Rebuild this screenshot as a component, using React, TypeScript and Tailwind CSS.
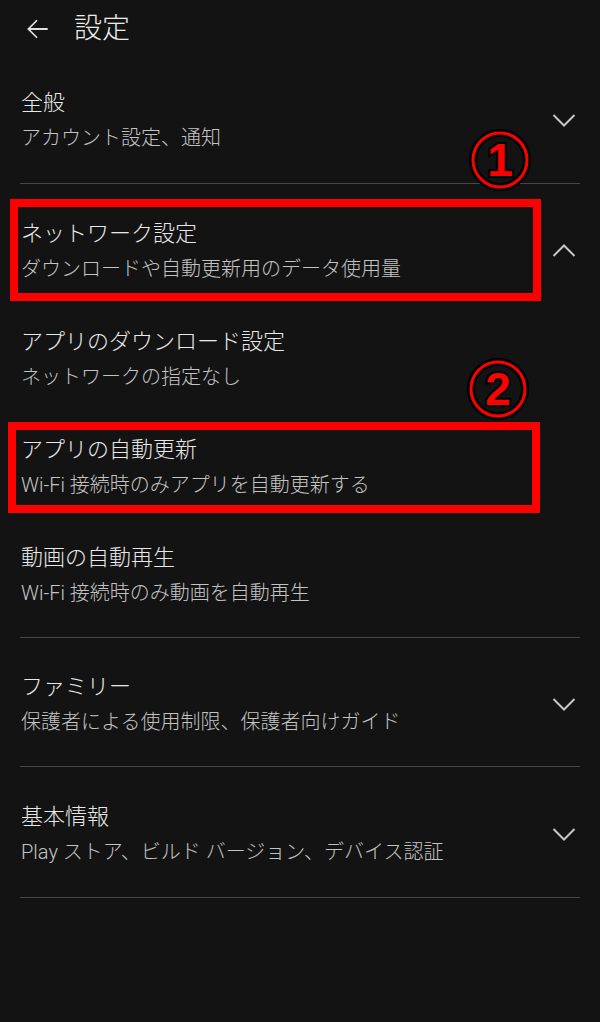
import { ReactNode } from 'react';

type Item = {
  title: string;
  subtitle: string;
};

const Chevron = ({ up = false }: { up?: boolean }) => (
  <svg width="24" height="24" viewBox="0 0 24 24" className="shrink-0">
    <path
      d={up ? 'M1.5 17 L12 6.5 L22.5 17' : 'M1.5 7 L12 17.5 L22.5 7'}
      fill="none"
      stroke="#c6c6c6"
      strokeWidth="2"
    />
  </svg>
);

const Pair = ({ item }: { item: Item }) => (
  <div className="flex flex-col min-w-0">
    <p className="text-[22px] leading-[30px] text-[#e8e8e8]">{item.title}</p>
    <p className="text-[20px] leading-[28px] mt-[6px] text-[#c3c3c3] whitespace-nowrap">{item.subtitle}</p>
  </div>
);

const Group = ({ item, icon, className }: { item: Item; icon: ReactNode; className: string }) => (
  <div className={`flex items-center justify-between pl-[21px] pr-[24px] ${className}`}>
    <Pair item={item} />
    {icon}
  </div>
);

const Divider = () => <div className="mx-5 h-px bg-[#474747]" />;

const Circled = ({ n, x, y }: { n: string; x: number; y: number }) => (
  <svg
    width="64"
    height="64"
    viewBox="0 0 64 64"
    className="absolute"
    style={{ left: x - 32, top: y - 32 }}
  >
    <circle cx="32" cy="32" r="27" fill="none" stroke="#000" strokeWidth="8" />
    <circle cx="32" cy="32" r="27" fill="none" stroke="#ff0000" strokeWidth="3" />
    <text
      x="32"
      y="48"
      textAnchor="middle"
      fontFamily="Liberation Sans, Arial, sans-serif"
      fontWeight="700"
      fontSize="46"
      fill="#ff0000"
      stroke="#000"
      strokeWidth="4"
      paintOrder="stroke"
    >
      {n}
    </text>
  </svg>
);

const network: Item[] = [
  { title: 'ネットワーク設定', subtitle: 'ダウンロードや自動更新用のデータ使用量' },
  { title: 'アプリのダウンロード設定', subtitle: 'ネットワークの指定なし' },
  { title: 'アプリの自動更新', subtitle: 'Wi-Fi 接続時のみアプリを自動更新する' },
  { title: '動画の自動再生', subtitle: 'Wi-Fi 接続時のみ動画を自動再生' },
];

export default function App() {
  return (
    <div className="relative h-[1022px] w-[600px] overflow-hidden bg-[#131313] font-light font-['Roboto','Noto_Sans_CJK_JP',sans-serif]">
      <div className="flex h-[57px] items-center pl-[21px]">
        <svg width="32" height="32" viewBox="0 0 24 24">
          <path
            d="M20 11.3H7.1l5.4-5.4L11.6 5l-7 7 7 7 .9-.9-5.4-5.4H20v-1.4z"
            fill="#e0e0e0"
          />
        </svg>
        <h1 className="ml-[21px] text-[28px] leading-[36px] text-[#ececec]">設定</h1>
      </div>

      <Group
        item={{ title: '全般', subtitle: 'アカウント設定、通知' }}
        icon={<Chevron />}
        className="pt-[31px] pb-[31px]"
      />
      <Divider />

      <div className="pt-[13px] pb-[8px]">
        {network.map((item, i) => (
          <div key={item.title} className="flex h-[108px] items-center justify-between pl-[21px] pr-[24px]">
            <Pair item={item} />
            {i === 0 && <Chevron up />}
          </div>
        ))}
      </div>
      <Divider />

      <Group
        item={{ title: 'ファミリー', subtitle: '保護者による使用制限、保護者向けガイド' }}
        icon={<Chevron />}
        className="pt-[34px] pb-[30px]"
      />
      <Divider />

      <Group
        item={{ title: '基本情報', subtitle: 'Play ストア、ビルド バージョン、デバイス認証' }}
        icon={<Chevron />}
        className="pt-[35px] pb-[31px]"
      />
      <Divider />

      {/* annotations */}
      <div className="absolute left-[10px] top-[199px] h-[102px] w-[531px] border-[8px] border-[#ff0000]" />
      <div className="absolute left-[8px] top-[422px] h-[91px] w-[532px] border-[8px] border-[#ff0000]" />
      <Circled n="1" x={500} y={160} />
      <Circled n="2" x={498} y={389} />
    </div>
  );
}
